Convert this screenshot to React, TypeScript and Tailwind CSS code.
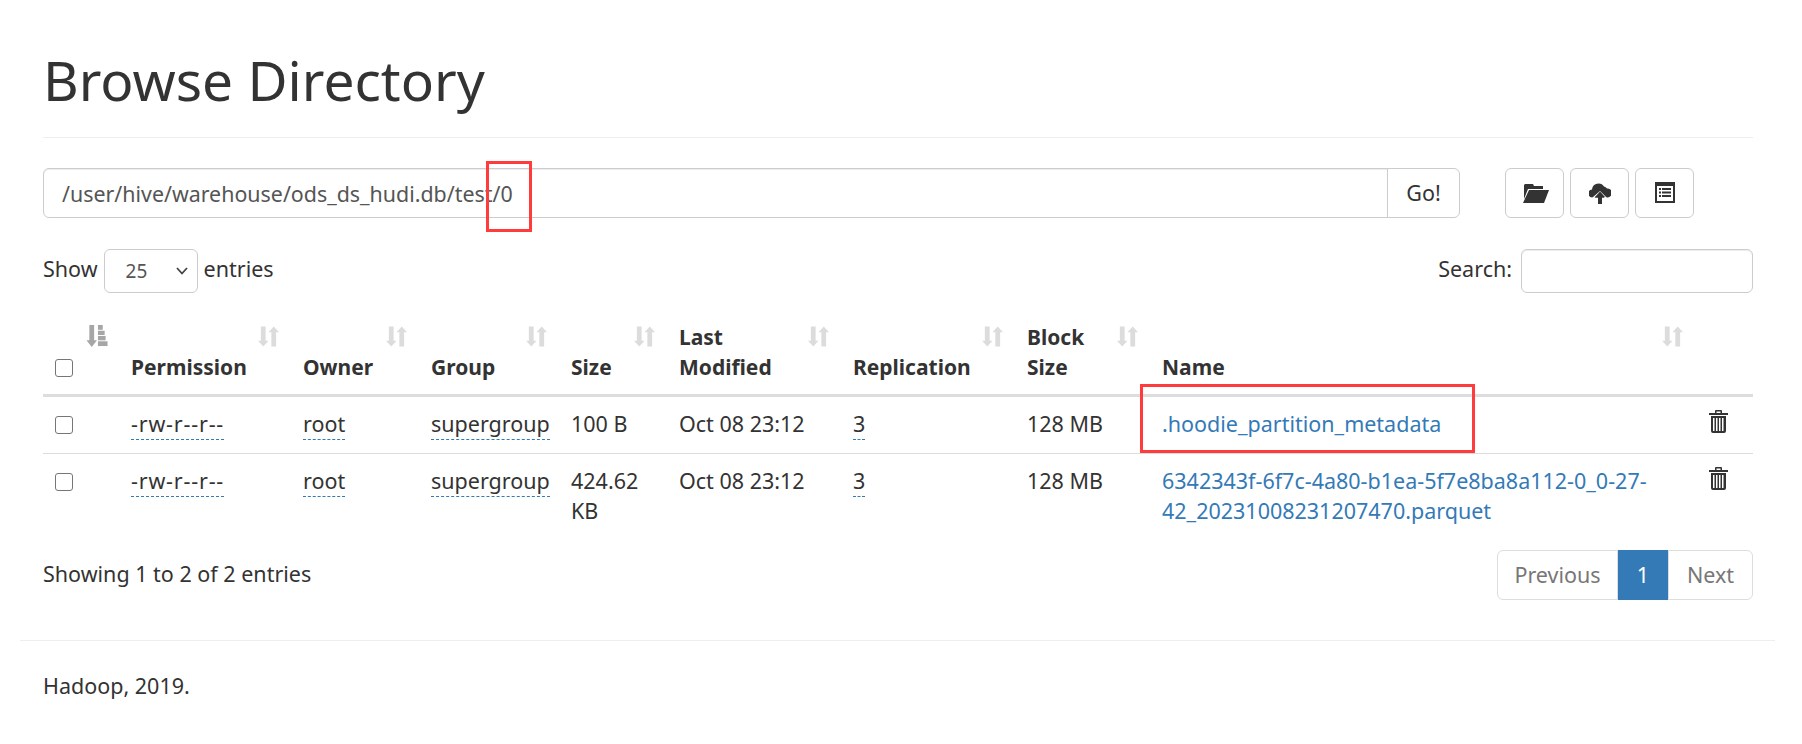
const rows = [
  { size: "100 B", name: ".hoodie_partition_metadata", tall: true },
  { size: "424.62 KB", name: "6342343f-6f7c-4a80-b1ea-5f7e8ba8a112-0_0-27-42_20231008231207470.parquet", tall: false },
];

function SortIcon({ active }: { active?: boolean }) {
  return (
    <svg viewBox="0 0 22 23" className={active ? "absolute top-[15px] right-[11px] w-[22px] h-[22px] text-[#a6a6a6]" : "absolute top-[15px] right-[12px] w-[21px] h-[23px] text-[#dcdcdc]"} fill="currentColor">
      {active ? (
        <>
          <path d="M3 0h5v16h3l-5.500 7L0 16h3z" />
          <rect x="12" y="0" width="5" height="5" />
          <rect x="12" y="6" width="7" height="4.500" />
          <rect x="12" y="11.500" width="8" height="4.500" />
          <rect x="12" y="17" width="10" height="5" />
        </>
      ) : (
        <>
          <path d="M3 1h5v15h3l-5.500 6L0 16h3z" />
          <path d="M14 22h5V7h3L16.500 1 11 7h3z" />
        </>
      )}
    </svg>
  );
}

function Th({ children, active }: { children?: React.ReactNode; active?: boolean }) {
  return (
    <th className="relative p-3 pr-8 text-left align-bottom font-bold text-[21px] border-b-[3px] border-[#dddddd]">
      {children}
      <SortIcon active={active} />
    </th>
  );
}

function Checkbox() {
  return <span className="block w-[18px] h-[18px] border-[1.5px] border-[#767676] rounded-[3px] bg-white" />;
}

function Abbr({ children, wide }: { children: React.ReactNode; wide?: boolean }) {
  return <span className={wide ? "border-b border-dashed border-[#337ab7] pb-[1px] tracking-[0.8px]" : "border-b border-dashed border-[#337ab7] pb-[1px]"}>{children}</span>;
}

function Trash() {
  return (
    <svg viewBox="0 0 19 23" className="block w-[19px] h-[23px] text-[#333333]" fill="currentColor">
      <path d="M7 0h5a1 1 0 0 1 1 1v2h6v2H0V3h6V1a1 1 0 0 1 1-1zm.500 1.500V3h4V1.500z" />
      <path fillRule="evenodd" d="M2 6h15v15a2 2 0 0 1-2 2H4a2 2 0 0 1-2-2zm2 2v13h1.500V8zm3 0v13h1.500V8zm3 0v13h1.500V8zm3 0v13h1.500V8z" />
    </svg>
  );
}

function IconButton({ children }: { children: React.ReactNode }) {
  return (
    <button className="flex items-center justify-center w-[59px] h-[50px] border border-[#cccccc] rounded-[6px] bg-white">
      {children}
    </button>
  );
}

export default function App() {
  return (
    <div className="relative min-h-[744px] bg-white text-[#333333] pl-[20px] pr-[27px] text-[21.5px] leading-[30px] font-['Noto_Sans',sans-serif]">
      <div className="pl-[23px] pr-[22px]">
        <div className="h-[138px] pt-[47px] border-b border-[#eeeeee]">
          <h1 className="text-[55px] leading-[66px] font-normal">Browse Directory</h1>
        </div>

        <div className="flex mt-[30px] h-[50px]">
          <div className="flex-1 flex items-center pt-[2px] pl-[18px] border border-[#cccccc] rounded-l-[6px] shadow-[inset_0_1px_1px_rgba(0,0,0,0.075)] text-[#555555] text-[21.4px]">
            /user/hive/warehouse/ods_ds_hudi.db/test/0
          </div>
          <button className="w-[73px] -ml-px border border-[#cccccc] rounded-r-[6px] bg-white">Go!</button>
          <div className="flex gap-[6px] ml-[45px] mr-[59px]">
            <IconButton>
              <svg viewBox="0 0 26 19" className="w-[26px] h-[19px] ml-[2px]" fill="currentColor">
                <path d="M2 0h8l1 2h9v3H5L1 15V2a2 2 0 0 1 1-2z" />
                <path d="M6 6h20l-5 13H0z" />
              </svg>
            </IconButton>
            <IconButton>
              <svg viewBox="0 0 22 21" className="w-[22px] h-[21px]" fill="currentColor">
                <path d="M11 14 5.500 14.500H4a4 4 0 0 1-1-8 6.500 6.500 0 0 1 12-3 4.500 4.500 0 0 1 3 2 4.500 4.500 0 0 1 1 9h-2.500z" />
                <path d="M11 9l6.500 6.500H3.500z" stroke="white" strokeWidth="1.500" />
                <path d="M11 8.500l5 5.500h-3v7H9v-7H6z" />
              </svg>
            </IconButton>
            <IconButton>
              <svg viewBox="0 0 20 21" className="w-[20px] h-[21px] -mt-[2px]" fill="currentColor" fillRule="evenodd">
                <path d="M0 0h20v21H0zm2 4v15h16V4z" />
                <path d="M4 6h2v2H4zm3 0h9v2H7zM4 9.500h2v2H4zm3 0h9v2H7zM4 13h2v2H4zm3 0h9v2H7z" />
              </svg>
            </IconButton>
          </div>
        </div>

        <div className="flex justify-between items-center mt-[31px] h-[44px]">
          <div className="flex items-center">
            <span className="pb-[4px]">Show</span>
            <span className="flex items-center justify-between w-[94px] h-[44px] ml-[6px] mr-[6px] pl-[21px] pr-[9px] border border-[#cccccc] rounded-[6px] text-[19px] text-[#555555]">
              25
              <svg viewBox="0 0 12 8" className="w-[12px] h-[8px]" fill="none" stroke="#444444" strokeWidth="1.800">
                <path d="M1 1l5 5.500L11 1" />
              </svg>
            </span>
            <span className="pb-[4px]">entries</span>
          </div>
          <div className="flex items-center gap-[9px]">
            <span className="pb-[4px]">Search:</span>
            <span className="block w-[232px] h-[44px] border border-[#cccccc] rounded-[6px] shadow-[inset_0_1px_1px_rgba(0,0,0,0.075)]" />
          </div>
        </div>

        <table className="w-full table-fixed mt-[17px] border-collapse">
          <colgroup>
            <col className="w-[76px]" />
            <col className="w-[172px]" />
            <col className="w-[128px]" />
            <col className="w-[140px]" />
            <col className="w-[108px]" />
            <col className="w-[174px]" />
            <col className="w-[174px]" />
            <col className="w-[135px]" />
            <col className="w-[545px]" />
            <col className="w-[58px]" />
          </colgroup>
          <thead>
            <tr>
              <Th active>
                <span className="block mb-[5px]"><Checkbox /></span>
              </Th>
              <Th>Permission</Th>
              <Th>Owner</Th>
              <Th>Group</Th>
              <Th>Size</Th>
              <Th>Last Modified</Th>
              <Th>Replication</Th>
              <Th>Block Size</Th>
              <Th>Name</Th>
              <th className="border-b-[3px] border-[#dddddd]" />
            </tr>
          </thead>
          <tbody>
            {rows.map((r) => (
              <tr key={r.name} className={r.tall ? "h-[58px] border-b border-[#dddddd]" : ""}>
                <td className="p-3 align-top"><span className="block mt-[7px]"><Checkbox /></span></td>
                <td className="p-3 align-top"><Abbr wide>-rw-r--r--</Abbr></td>
                <td className="p-3 align-top"><Abbr>root</Abbr></td>
                <td className="p-3 align-top"><Abbr>supergroup</Abbr></td>
                <td className="p-3 align-top">{r.size}</td>
                <td className="p-3 align-top">Oct 08 23:12</td>
                <td className="p-3 align-top"><Abbr>3</Abbr></td>
                <td className="p-3 align-top">128 MB</td>
                <td className="p-3 align-top text-[#337ab7]">{r.name}</td>
                <td className="p-3 align-top"><span className="block mt-[1px] ml-[2px]"><Trash /></span></td>
              </tr>
            ))}
          </tbody>
        </table>

        <div className="flex justify-between items-center mt-[12px] h-[50px]">
          <span className="pb-[3px]">Showing 1 to 2 of 2 entries</span>
          <div className="flex h-[50px]">
            <span className="flex items-center justify-center w-[121px] border border-[#dddddd] rounded-l-[6px] text-[#777777]">Previous</span>
            <span className="flex items-center justify-center w-[50px] bg-[#337ab7] text-white">1</span>
            <span className="flex items-center justify-center w-[85px] border border-[#dddddd] rounded-r-[6px] text-[#777777]">Next</span>
          </div>
        </div>
      </div>

      <div className="mt-[40px] pt-[30px] border-t border-[#eeeeee] px-[23px]">Hadoop, 2019.</div>

      <div className="absolute left-[486px] top-[161px] w-[46px] h-[71px] border-[3px] border-[#ff3b3b]" />
      <div className="absolute left-[1140px] top-[384px] w-[335px] h-[69px] border-[3px] border-[#ff3b3b]" />
    </div>
  );
}
